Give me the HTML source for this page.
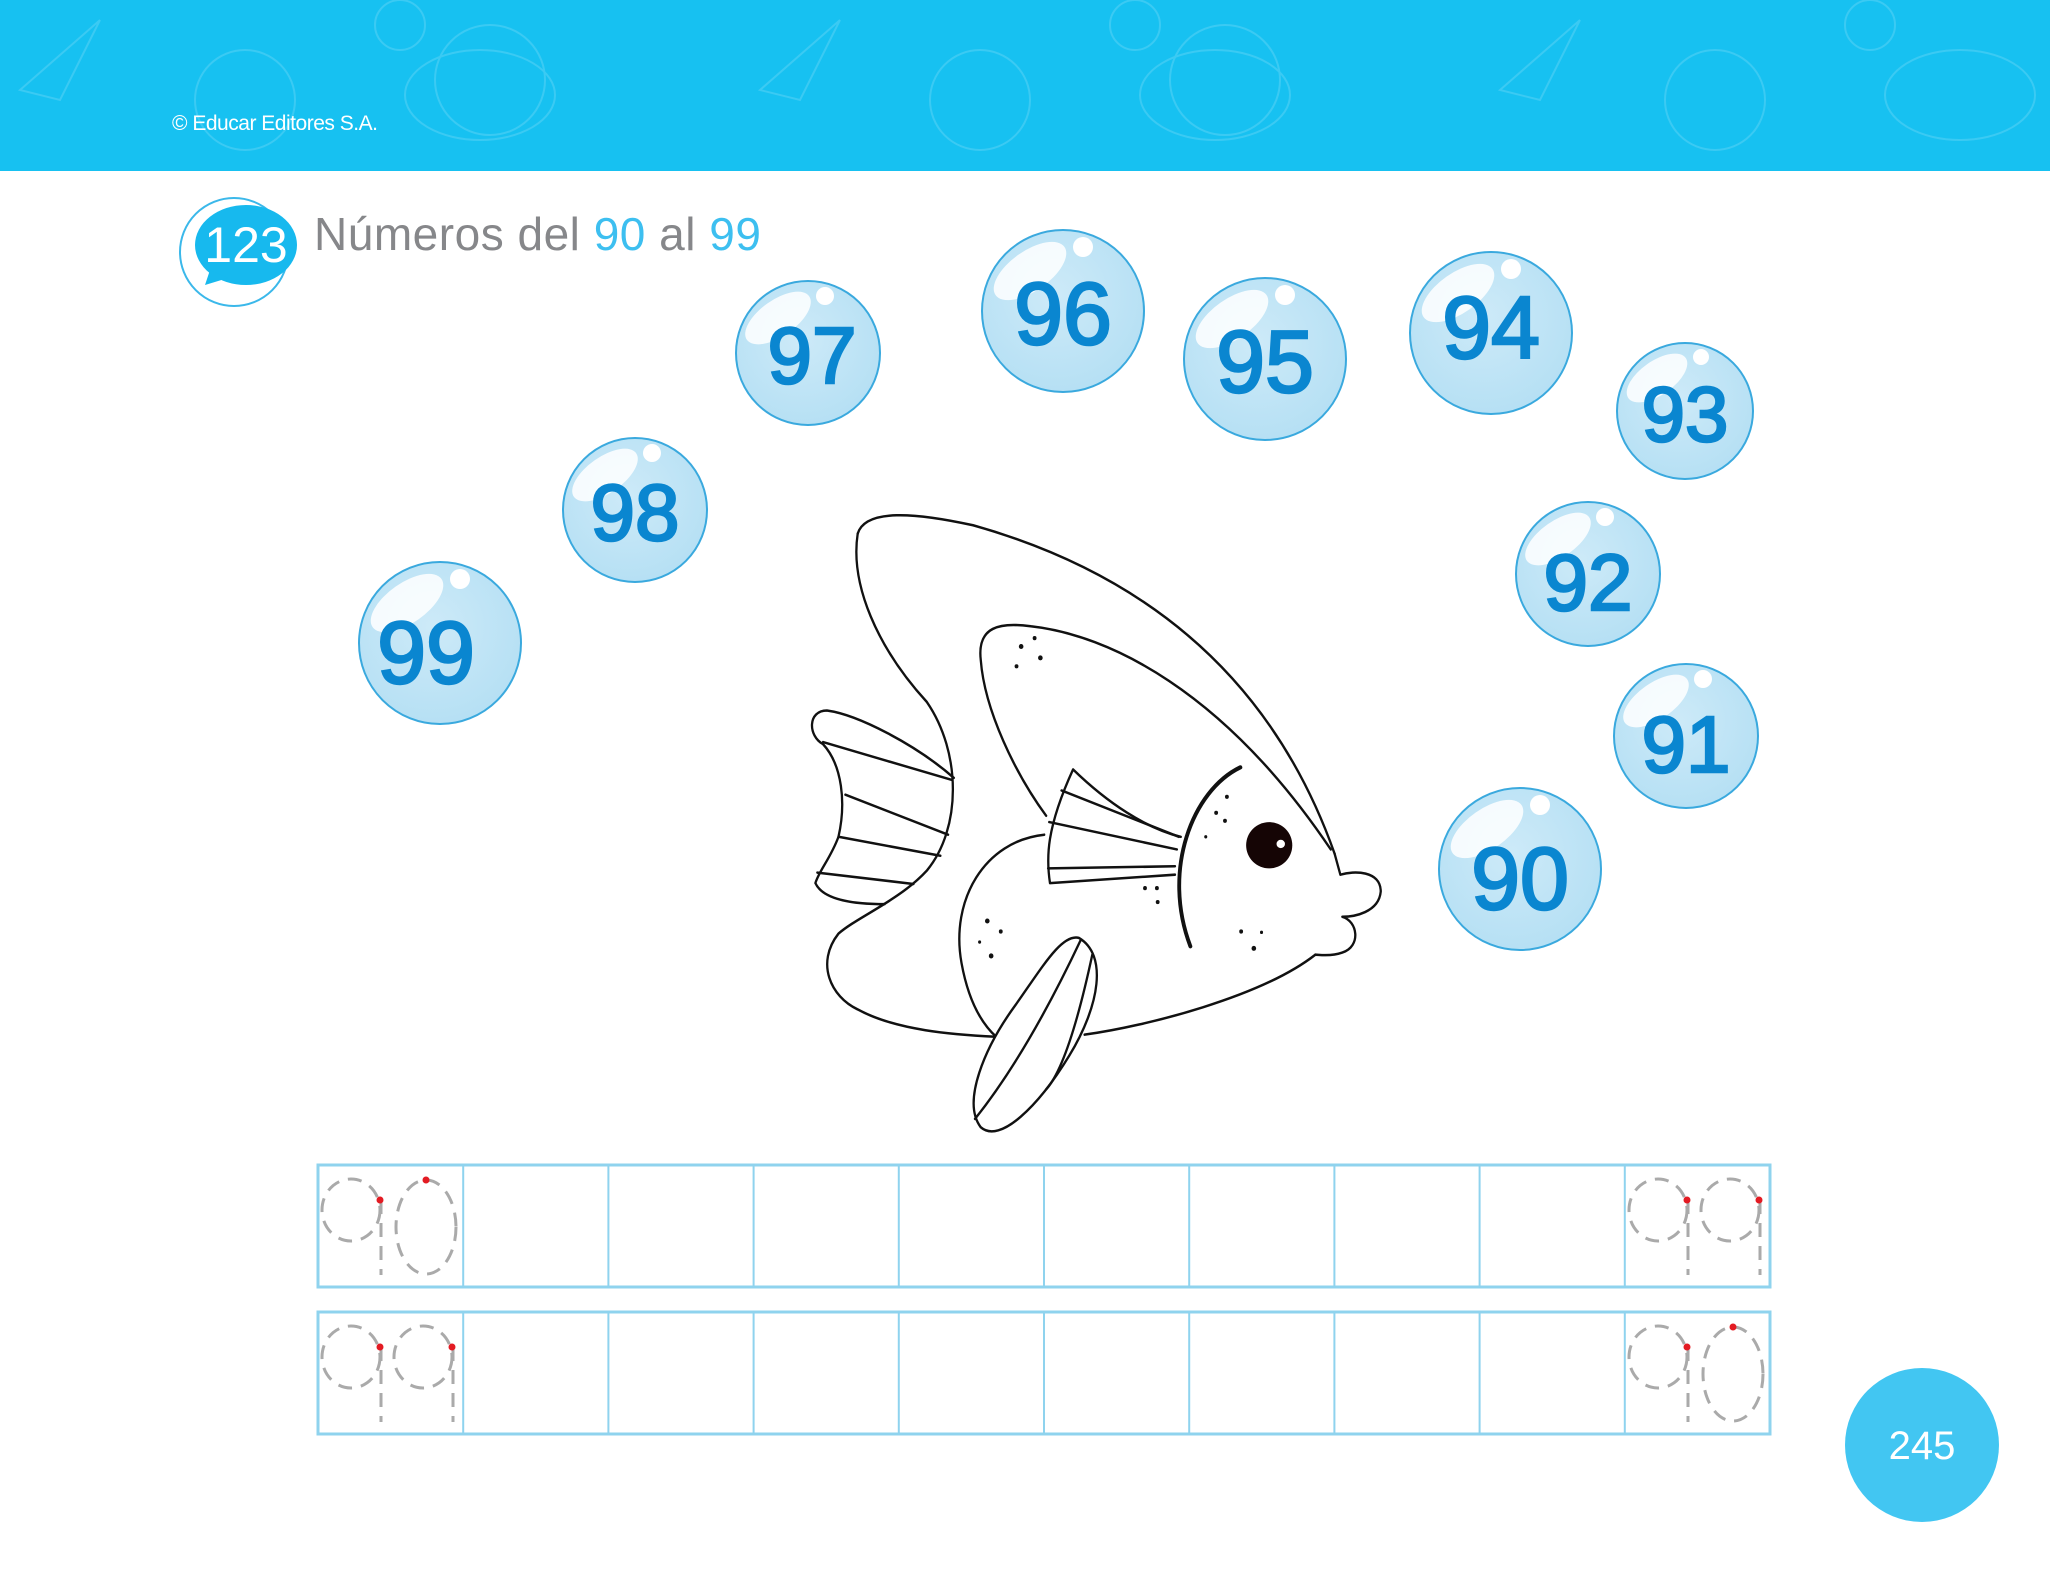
<!DOCTYPE html>
<html><head><meta charset="utf-8"><style>
html,body{margin:0;padding:0;background:#fff;width:2050px;height:1571px;overflow:hidden}
svg{display:block}
</style></head><body>
<svg width="2050" height="1571" viewBox="0 0 2050 1571" xmlns="http://www.w3.org/2000/svg">
<defs>
<radialGradient id="bg" cx="0.45" cy="0.4" r="0.6"><stop offset="0" stop-color="#cdeaf8"/><stop offset="1" stop-color="#b6e0f4"/></radialGradient>
<g id="b9"><ellipse cx="0" cy="0" rx="29" ry="31" fill="none" stroke="#aaa" stroke-width="3" stroke-dasharray="14 9"/><line x1="30" y1="-10" x2="30" y2="65" stroke="#aaa" stroke-width="3" stroke-dasharray="14 9"/><circle cx="29" cy="-10" r="3.5" fill="#e31b23"/></g>
<g id="b0"><ellipse cx="0" cy="0" rx="30" ry="47" fill="none" stroke="#aaa" stroke-width="3" stroke-dasharray="14 9"/><circle cx="0" cy="-47" r="3.5" fill="#e31b23"/></g>
</defs>
<rect x="0" y="0" width="2050" height="171" fill="#17c1f1"/>
<g fill="none" stroke="#5fd3f5" stroke-width="2" opacity="0.5">
<ellipse cx="480" cy="95" rx="75" ry="45"/><circle cx="490" cy="80" r="55"/>
<ellipse cx="1215" cy="95" rx="75" ry="45"/><circle cx="1225" cy="80" r="55"/>
<ellipse cx="1960" cy="95" rx="75" ry="45"/>
<circle cx="245" cy="100" r="50"/><circle cx="980" cy="100" r="50"/><circle cx="1715" cy="100" r="50"/>
<path d="M20 90 L100 20 L60 100 Z M760 90 L840 20 L800 100 Z M1500 90 L1580 20 L1540 100 Z"/>
<circle cx="400" cy="25" r="25"/><circle cx="1135" cy="25" r="25"/><circle cx="1870" cy="25" r="25"/>
</g>
<text x="172" y="130" font-family="Liberation Sans Narrow, Liberation Sans, sans-serif" font-size="21" fill="#fff" textLength="206">© Educar Editores S.A.</text>
<circle cx="234" cy="252" r="54" fill="#fff" stroke="#3bb8ea" stroke-width="2"/>
<ellipse cx="246" cy="245" rx="51" ry="40" fill="#17b9ee"/>
<path d="M210 270 L205 285 L228 278 Z" fill="#17b9ee"/>
<text x="246" y="262" text-anchor="middle" font-family="Liberation Sans, sans-serif" font-size="50" fill="#fff">123</text>
<text x="314" y="250" font-family="Liberation Sans, sans-serif" font-size="46" fill="#86878a" textLength="447">Números del <tspan fill="#3dbff0">90</tspan> al <tspan fill="#3dbff0">99</tspan></text>
<g font-family="Liberation Sans, sans-serif" fill="#0a86d0" stroke="#0a86d0" stroke-width="2.5" text-anchor="middle">
<g transform="translate(808,353)"><circle r="72" fill="url(#bg)" stroke="#3aa9de" stroke-width="2"/><ellipse cx="-30" cy="-35" rx="38" ry="18" transform="rotate(-35 -30 -35)" fill="#fff" stroke="none" opacity="0.85"/><circle cx="17" cy="-57" r="9" fill="#fff" stroke="none"/><text x="4" y="30" font-size="80">97</text></g>
<g transform="translate(1063,311)"><circle r="81" fill="url(#bg)" stroke="#3aa9de" stroke-width="2"/><ellipse cx="-33" cy="-40" rx="42" ry="20" transform="rotate(-35 -33 -40)" fill="#fff" stroke="none" opacity="0.85"/><circle cx="20" cy="-64" r="10" fill="#fff" stroke="none"/><text y="33" font-size="88">96</text></g>
<g transform="translate(1265,359)"><circle r="81" fill="url(#bg)" stroke="#3aa9de" stroke-width="2"/><ellipse cx="-33" cy="-40" rx="42" ry="20" transform="rotate(-35 -33 -40)" fill="#fff" stroke="none" opacity="0.85"/><circle cx="20" cy="-64" r="10" fill="#fff" stroke="none"/><text y="33" font-size="88">95</text></g>
<g transform="translate(1491,333)"><circle r="81" fill="url(#bg)" stroke="#3aa9de" stroke-width="2"/><ellipse cx="-33" cy="-40" rx="42" ry="20" transform="rotate(-35 -33 -40)" fill="#fff" stroke="none" opacity="0.85"/><circle cx="20" cy="-64" r="10" fill="#fff" stroke="none"/><text y="25" font-size="88">94</text></g>
<g transform="translate(1685,411)"><circle r="68" fill="url(#bg)" stroke="#3aa9de" stroke-width="2"/><ellipse cx="-28" cy="-33" rx="35" ry="17" transform="rotate(-35 -28 -33)" fill="#fff" stroke="none" opacity="0.85"/><circle cx="16" cy="-54" r="8" fill="#fff" stroke="none"/><text y="30" font-size="78">93</text></g>
<g transform="translate(635,510)"><circle r="72" fill="url(#bg)" stroke="#3aa9de" stroke-width="2"/><ellipse cx="-30" cy="-35" rx="38" ry="18" transform="rotate(-35 -30 -35)" fill="#fff" stroke="none" opacity="0.85"/><circle cx="17" cy="-57" r="9" fill="#fff" stroke="none"/><text y="30" font-size="80">98</text></g>
<g transform="translate(440,643)"><circle r="81" fill="url(#bg)" stroke="#3aa9de" stroke-width="2"/><ellipse cx="-33" cy="-40" rx="42" ry="20" transform="rotate(-35 -33 -40)" fill="#fff" stroke="none" opacity="0.85"/><circle cx="20" cy="-64" r="10" fill="#fff" stroke="none"/><text x="-14" y="40" font-size="88">99</text></g>
<g transform="translate(1588,574)"><circle r="72" fill="url(#bg)" stroke="#3aa9de" stroke-width="2"/><ellipse cx="-30" cy="-35" rx="38" ry="18" transform="rotate(-35 -30 -35)" fill="#fff" stroke="none" opacity="0.85"/><circle cx="17" cy="-57" r="9" fill="#fff" stroke="none"/><text y="36" font-size="80">92</text></g>
<g transform="translate(1686,736)"><circle r="72" fill="url(#bg)" stroke="#3aa9de" stroke-width="2"/><ellipse cx="-30" cy="-35" rx="38" ry="18" transform="rotate(-35 -30 -35)" fill="#fff" stroke="none" opacity="0.85"/><circle cx="17" cy="-57" r="9" fill="#fff" stroke="none"/><text y="36" font-size="80">91</text></g>
<g transform="translate(1520,869)"><circle r="81" fill="url(#bg)" stroke="#3aa9de" stroke-width="2"/><ellipse cx="-33" cy="-40" rx="42" ry="20" transform="rotate(-35 -33 -40)" fill="#fff" stroke="none" opacity="0.85"/><circle cx="20" cy="-64" r="10" fill="#fff" stroke="none"/><text y="40" font-size="88">90</text></g>
</g>
<g transform="translate(800,500) scale(0.3846,0.421)" fill="none" stroke="#111" stroke-width="6" stroke-linecap="round" stroke-linejoin="round">
<path d="M150,80 C170,20 300,30 450,60 C800,150 1200,350 1390,840"/>
<path d="M150,80 C130,200 200,350 330,480 C420,600 420,780 330,880 C260,950 150,990 100,1030 C40,1100 80,1180 150,1210 C250,1260 400,1270 510,1275"/>
<path d="M740,1270 C900,1250 1200,1180 1340,1080"/>
<path d="M1390,840 L1405,890 C1440,880 1510,880 1510,930 C1505,980 1440,990 1410,990 C1450,1000 1460,1060 1410,1075 C1380,1085 1350,1080 1340,1080"/>
<path d="M640,750 C560,650 480,500 470,380 C460,300 520,290 600,300 C800,320 1100,450 1380,830"/>
<path d="M635,795 C480,810 390,950 420,1100 C440,1200 480,1250 510,1275"/>
<path d="M400,660 C300,580 150,510 70,500 C20,500 20,560 60,580 C110,630 120,720 100,800 C80,850 50,880 40,910 C60,950 140,960 220,960"/>
<path d="M60,575 L395,665 M118,700 L385,795 M100,800 L365,845 M45,885 L295,912"/>
<path d="M650,910 C640,850 640,780 710,640 C800,720 900,780 990,800 M650,910 L975,890"/>
<path d="M680,690 L985,800 M648,765 L980,830 M645,875 L975,870"/>
<path d="M1145,635 C1020,690 940,880 1015,1060" stroke-width="10"/>
<path d="M725,1040 C800,1080 780,1200 700,1320 C620,1440 520,1530 470,1490 C420,1430 480,1300 560,1200 C630,1110 680,1030 725,1040 Z" fill="#fff"/>
<path d="M730,1045 C650,1200 560,1350 455,1470 M760,1080 C720,1250 680,1360 640,1400"/>
<ellipse cx="1220" cy="820" rx="60" ry="55" fill="#150505" stroke="none"/>
<ellipse cx="1250" cy="817" rx="11" ry="10" fill="#fff" stroke="none"/>
<g fill="#111" stroke="none"><circle cx="575" cy="348" r="6"/><circle cx="610" cy="328" r="5"/><circle cx="625" cy="375" r="6"/><circle cx="563" cy="395" r="5"/><circle cx="1110" cy="705" r="5"/><circle cx="1082" cy="743" r="5"/><circle cx="1105" cy="762" r="5"/><circle cx="1055" cy="800" r="4"/><circle cx="897" cy="922" r="5"/><circle cx="928" cy="922" r="5"/><circle cx="930" cy="955" r="5"/><circle cx="487" cy="1000" r="6"/><circle cx="522" cy="1025" r="5"/><circle cx="467" cy="1050" r="4"/><circle cx="497" cy="1083" r="6"/><circle cx="1147" cy="1025" r="5"/><circle cx="1200" cy="1027" r="4"/><circle cx="1180" cy="1065" r="6"/></g>
</g>
<g fill="none" stroke="#8fd3ee" stroke-width="2">
<rect x="318" y="1165" width="1452" height="122" stroke-width="3"/>
<rect x="318" y="1312" width="1452" height="122" stroke-width="3"/>
<path d="M463.2 1165V1287M608.4 1165V1287M753.6 1165V1287M898.8 1165V1287M1044 1165V1287M1189.2 1165V1287M1334.4 1165V1287M1479.6 1165V1287M1624.8 1165V1287"/>
<path d="M463.2 1312V1434M608.4 1312V1434M753.6 1312V1434M898.8 1312V1434M1044 1312V1434M1189.2 1312V1434M1334.4 1312V1434M1479.6 1312V1434M1624.8 1312V1434"/>
</g>
<use href="#b9" x="351" y="1210"/><use href="#b0" x="426" y="1227"/>
<use href="#b9" x="1658" y="1210"/><use href="#b9" x="1730" y="1210"/>
<use href="#b9" x="351" y="1357"/><use href="#b9" x="423" y="1357"/>
<use href="#b9" x="1658" y="1357"/><use href="#b0" x="1733" y="1374"/>
<circle cx="1922" cy="1445" r="77" fill="#42c6f2"/>
<text x="1922" y="1459" text-anchor="middle" font-family="Liberation Sans, sans-serif" font-size="40" fill="#fff">245</text>
</svg>
</body></html>
